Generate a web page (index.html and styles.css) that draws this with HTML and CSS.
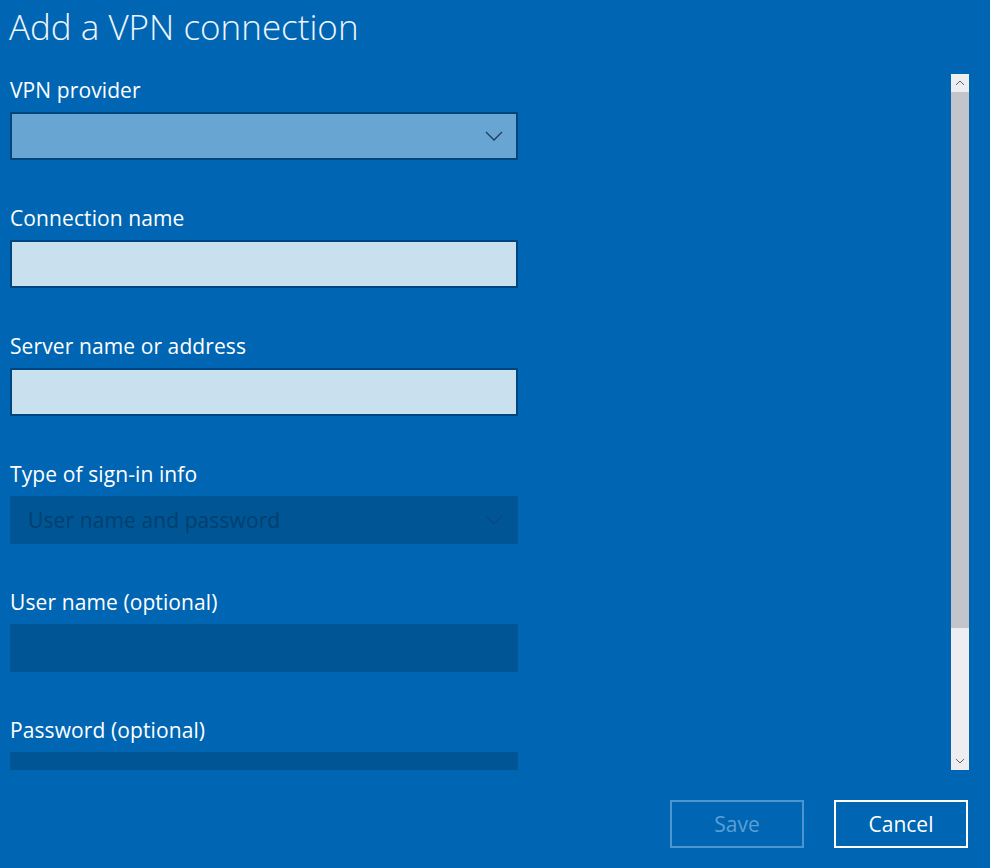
FILE: index.html
```html
<!DOCTYPE html>
<html lang="en">
<head>
<meta charset="utf-8">
<title>Add a VPN connection</title>
<link rel="stylesheet" href="styles.css">
</head>
<body>
<div class="dialog">
  <h1 class="title">Add a VPN connection</h1>
  <div class="main">
    <div class="scroll">
      <div class="field">
        <div class="label">VPN provider</div>
        <div class="control select">
          <svg class="chev" width="18" height="10" viewBox="0 0 18 10"><path d="M1 1 L9 9 L17 1" fill="none" stroke="#1c3d5c" stroke-width="1.3"/></svg>
        </div>
      </div>
      <div class="field">
        <div class="label">Connection name</div>
        <div class="control input"></div>
      </div>
      <div class="field">
        <div class="label">Server name or address</div>
        <div class="control input"></div>
      </div>
      <div class="field">
        <div class="label">Type of sign-in info</div>
        <div class="control disabled">
          <span class="dtext">User name and password</span>
          <svg class="chev" width="18" height="10" viewBox="0 0 18 10"><path d="M1 1 L9 9 L17 1" fill="none" stroke="#0a4a7c" stroke-width="1.3"/></svg>
        </div>
      </div>
      <div class="field">
        <div class="label">User name (optional)</div>
        <div class="control disabled"></div>
      </div>
      <div class="field">
        <div class="label">Password (optional)</div>
        <div class="control disabled"></div>
      </div>
    </div>
    <div class="scrollbar">
      <div class="sb-btn"><svg width="10" height="6" viewBox="0 0 10 6"><path d="M1 5 L5 1 L9 5" fill="none" stroke="#606060" stroke-width="1"/></svg></div>
      <div class="sb-thumb"></div>
      <div class="sb-track"></div>
      <div class="sb-btn"><svg width="10" height="6" viewBox="0 0 10 6"><path d="M1 1 L5 5 L9 1" fill="none" stroke="#606060" stroke-width="1"/></svg></div>
    </div>
  </div>
  <div class="footer">
    <button class="btn btn-save">Save</button>
    <button class="btn btn-cancel">Cancel</button>
  </div>
</div>
</body>
</html>
```
FILE: styles.css
```css
html, body {
  margin: 0;
  padding: 0;
  background: #0066b3;
}
.dialog {
  width: 990px;
  height: 868px;
  background: #0066b3;
  font-family: "Open Sans", "Noto Sans", sans-serif;
  color: #ffffff;
  display: flex;
  flex-direction: column;
  overflow: hidden;
}
.title {
  margin: 0;
  height: 74px;
  padding: 4px 0 0 9px;
  box-sizing: border-box;
  font-size: 35px;
  font-weight: 300;
  line-height: 46px;
  color: #eef5fb;
}
.main {
  display: flex;
  height: 696px;
  padding-right: 21px;
}
.scroll {
  flex: 1;
  overflow: hidden;
  padding: 2px 0 0 10px;
}
.field {
  width: 508px;
  margin-bottom: 44px;
}
.label {
  font-size: 21px;
  line-height: 28px;
  height: 28px;
  margin-bottom: 8px;
  letter-spacing: 0.1px;
  white-space: nowrap;
}
.control {
  height: 48px;
  box-sizing: border-box;
  position: relative;
  display: flex;
  align-items: center;
}
.select {
  background: #69a5d3;
  border: 2px solid #00467c;
}
.input {
  background: #c9e1ee;
  border: 2px solid #00467c;
}
.disabled {
  background: #005595;
}
.chev {
  position: absolute;
  right: 15px;
  top: 19px;
}
.select .chev { top: 17px; right: 13px; }
.dtext {
  padding-left: 18px;
  font-size: 21px;
  letter-spacing: 0.1px;
  color: #00406f;
}
.scrollbar {
  width: 18px;
  display: flex;
  flex-direction: column;
  background: #eeeef2;
}
.sb-btn {
  height: 18px;
  display: flex;
  align-items: center;
  justify-content: center;
  background: #eeeef2;
}
.sb-thumb {
  height: 536px;
  background: #c4c5ca;
}
.sb-track {
  flex: 1;
  background: #eeeef2;
}
.footer {
  flex: 1;
  display: flex;
  justify-content: flex-end;
  align-items: flex-start;
  gap: 30px;
  padding: 30px 22px 0 0;
}
.btn {
  width: 134px;
  height: 48px;
  background: transparent;
  font-family: "Open Sans", "Noto Sans", sans-serif;
  font-size: 21px;
  padding: 0;
  box-sizing: border-box;
  cursor: default;
}
.btn-save {
  border: 2px solid #4c95cf;
  color: #5b9fd4;
}
.btn-cancel {
  border: 2px solid #ffffff;
  color: #ffffff;
}
```
